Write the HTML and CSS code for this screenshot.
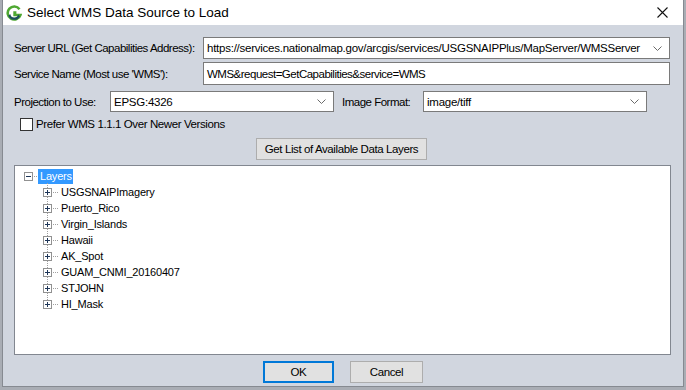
FILE: index.html
```html
<!DOCTYPE html>
<html lang="en">
<head>
    <meta charset="UTF-8">
    <title>Select WMS Data Source to Load</title>
    <link rel="stylesheet" href="styles.css">
</head>
<body>
    <div class="dialog">
        <div class="titlebar">
            <svg class="app-icon" width="16" height="16" viewBox="0 0 16 16">
                <path d="M13.5 4.2A6.5 6.5 0 1 0 14.4 10H8.6V7.6h1.8" fill="none" stroke="#4fa832" stroke-width="2.6"/>
                <path d="M2.2 10.5A6.4 6.4 0 0 0 14 11.2L12.2 9.6A4 4 0 0 1 4.4 9.2Z" fill="#1c4f5c"/>
            </svg>
            <span class="title">Select WMS Data Source to Load</span>
            <svg class="close" width="11" height="11" viewBox="0 0 11 11">
                <path d="M0.5 0.5L10.5 10.5M10.5 0.5L0.5 10.5" stroke="#111" stroke-width="1.1"/>
            </svg>
        </div>

        <div class="content">
            <div class="row">
                <label class="lbl lbl-url">Server URL (Get Capabilities Address):</label>
                <div class="combo wide">
                    <span class="value">https://services.nationalmap.gov/arcgis/services/USGSNAIPPlus/MapServer/WMSServer</span>
                    <svg class="chevron" width="9" height="5" viewBox="0 0 9 5"><path d="M0.5 0.5L4.5 4.5L8.5 0.5" fill="none" stroke="#6b6b6b"/></svg>
                </div>
            </div>
            <div class="row row-service">
                <label class="lbl lbl-url">Service Name (Most use 'WMS'):</label>
                <div class="textbox wide">WMS&amp;request=GetCapabilities&amp;service=WMS</div>
            </div>
            <div class="row row-proj">
                <label class="lbl lbl-proj">Projection to Use:</label>
                <div class="combo half">
                    <span class="value">EPSG:4326</span>
                    <svg class="chevron" width="9" height="5" viewBox="0 0 9 5"><path d="M0.5 0.5L4.5 4.5L8.5 0.5" fill="none" stroke="#6b6b6b"/></svg>
                </div>
                <label class="lbl lbl-fmt">Image Format:</label>
                <div class="combo half">
                    <span class="value">image/tiff</span>
                    <svg class="chevron" width="9" height="5" viewBox="0 0 9 5"><path d="M0.5 0.5L4.5 4.5L8.5 0.5" fill="none" stroke="#6b6b6b"/></svg>
                </div>
            </div>
            <div class="check-row">
                <span class="checkbox"></span>
                <span>Prefer WMS 1.1.1 Over Newer Versions</span>
            </div>
            <div class="fetch-row">
                <button class="btn fetch">Get List of Available Data Layers</button>
            </div>

            <div class="tree">
                <div class="node root">
                    <span class="toggle minus"></span><span class="stub"></span><span class="label selected">Layers</span>
                </div>
                <div class="children">
                    <div class="node"><span class="toggle plus"></span><span class="stub"></span><span class="label">USGSNAIPImagery</span></div>
                    <div class="node"><span class="toggle plus"></span><span class="stub"></span><span class="label">Puerto_Rico</span></div>
                    <div class="node"><span class="toggle plus"></span><span class="stub"></span><span class="label">Virgin_Islands</span></div>
                    <div class="node"><span class="toggle plus"></span><span class="stub"></span><span class="label">Hawaii</span></div>
                    <div class="node"><span class="toggle plus"></span><span class="stub"></span><span class="label">AK_Spot</span></div>
                    <div class="node"><span class="toggle plus"></span><span class="stub"></span><span class="label">GUAM_CNMI_20160407</span></div>
                    <div class="node"><span class="toggle plus"></span><span class="stub"></span><span class="label">STJOHN</span></div>
                    <div class="node"><span class="toggle plus"></span><span class="stub"></span><span class="label">HI_Mask</span></div>
                </div>
            </div>

            <div class="actions">
                <button class="btn ok">OK</button>
                <button class="btn cancel">Cancel</button>
            </div>
        </div>
    </div>
</body>
</html>
```

FILE: styles.css
```css
* {
    box-sizing: border-box;
}
body {
    margin: 0;
    background: #a9adb4;
    font-family: "Liberation Sans", Arial, sans-serif;
    font-size: 11.5px;
    color: #000;
    overflow: hidden;
    height: 390px;
}
.dialog {
    margin-left: 2px;
    width: 682px;
    height: 387px;
    background-color: #d1d6df;
    border: 1px solid #868a91;
    border-top: none;
    display: flex;
    flex-direction: column;
}
.titlebar {
    height: 25px;
    background: #fff;
    display: flex;
    align-items: center;
    padding-left: 3px;
    flex-shrink: 0;
}
.app-icon {
    margin-right: 5px;
}
.title {
    font-size: 13.5px;
    color: #000;
}
.close {
    margin-left: auto;
    margin-right: 15px;
}
.content {
    padding: 12px 0 0 11px;
    display: flex;
    flex-direction: column;
}
.row {
    display: flex;
    align-items: center;
    height: 22px;
}
.row-service {
    margin-top: 3px;
    height: 23px;
}
.row-proj {
    margin-top: 6px;
    height: 21px;
}
.lbl {
    letter-spacing: -0.5px;
    white-space: nowrap;
    flex-shrink: 0;
}
.lbl-url {
    width: 189px;
}
.lbl-proj {
    width: 96px;
}
.lbl-fmt {
    width: 81px;
    margin-left: 8px;
}
.combo,
.textbox {
    height: 100%;
    background: #fff;
    border: 1px solid #7a7a7a;
    display: flex;
    align-items: center;
    padding: 0 0 0 3px;
    letter-spacing: -0.25px;
    white-space: nowrap;
    overflow: hidden;
}
.textbox {
    letter-spacing: -0.5px;
}
.combo .value {
    flex-grow: 1;
    overflow: hidden;
}
.chevron {
    margin: 0 7px 0 6px;
    flex-shrink: 0;
}
.wide {
    width: 467px;
}
.half {
    width: 224px;
}
.check-row {
    margin-top: 5px;
    height: 14px;
    display: flex;
    align-items: center;
    padding-left: 6px;
    letter-spacing: -0.4px;
}
.checkbox {
    width: 13px;
    height: 13px;
    background: #fff;
    border: 1px solid #333;
    margin-right: 3px;
}
.fetch-row {
    margin-top: 7px;
    display: flex;
    justify-content: center;
    width: 655px;
}
.btn {
    font-family: inherit;
    font-size: 11.5px;
    letter-spacing: -0.4px;
    height: 22px;
    background: #e1e1e1;
    border: 1px solid #adadad;
    color: #000;
    padding: 0;
}
.fetch {
    width: 171px;
}
.tree {
    margin-top: 5px;
    width: 657px;
    height: 190px;
    background: #fff;
    border: 1px solid #828790;
    padding: 2px 0 0 9px;
    font-size: 11px;
    letter-spacing: -0.2px;
}
.node {
    display: flex;
    align-items: center;
    height: 16px;
}
.children {
    position: relative;
    padding-left: 19px;
}
.children::before {
    content: "";
    position: absolute;
    left: 23px;
    top: -1px;
    bottom: 8px;
    border-left: 1px dotted #a0a0a0;
}
.toggle {
    position: relative;
    width: 9px;
    height: 9px;
    background: #fff;
    border: 1px solid #919191;
    flex-shrink: 0;
    z-index: 1;
}
.toggle::before {
    content: "";
    position: absolute;
    left: 1px;
    top: 3px;
    width: 5px;
    height: 1px;
    background: #1e3658;
}
.plus::after {
    content: "";
    position: absolute;
    left: 3px;
    top: 1px;
    width: 1px;
    height: 5px;
    background: #1e3658;
}
.stub {
    width: 5px;
    border-top: 1px dotted #a0a0a0;
    margin: 0 1px 0 1px;
}
.root .stub {
    width: 3px;
    margin-right: 1px;
}
.label {
    line-height: 15px;
    padding: 0 2px;
}
.root .label {
    padding: 0 1px 0 2px;
}
.selected {
    background: #3399ff;
    color: #fff;
}
.actions {
    margin-top: 6px;
    display: flex;
    gap: 16px;
    padding-left: 249px;
}
.ok {
    width: 71px;
    border: 2px solid #0078d7;
}
.cancel {
    width: 73px;
}
```
